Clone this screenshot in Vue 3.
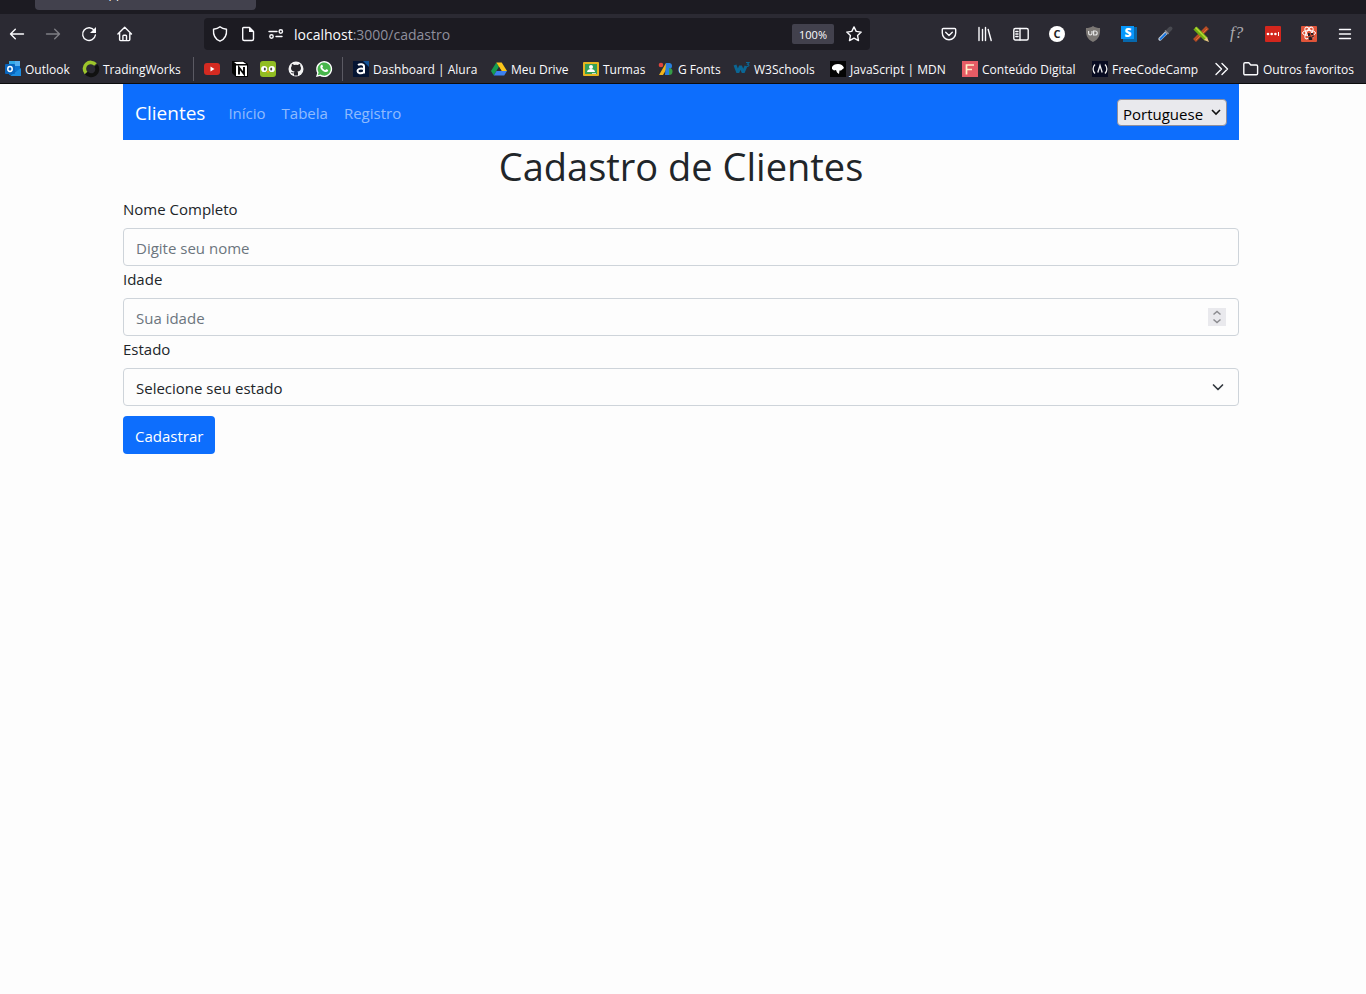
<script setup>
import { ref } from 'vue'

const line = 'fill="none" stroke="#fbfbfe" stroke-width="1.4" stroke-linecap="round" stroke-linejoin="round"'

const navButtons = [
  { label: 'Voltar', art: `<path ${line} d="M14.500 8H1.500M6.300 3.200 1.500 8l4.800 4.800"/>` },
  { label: 'Avançar', dim: true, art: `<path ${line} d="M1.500 8h13M9.700 3.200 14.500 8l-4.800 4.800"/>` },
  { label: 'Recarregar', art: `<path ${line} d="M13.4 4.6A6.4 6.4 0 1 0 14.4 9"/><path fill="#fbfbfe" d="M15 1v6H9z"/>` },
  { label: 'Página inicial', art: `<path ${line} d="M.9 8 7.700 1.200 14.500 8M2.600 7v6.600c0 .6.4 1 1 1h8.200c.6 0 1-.4 1-1V7M5.900 14.500V10c0-.5.3-.8.8-.8h2c.5 0 .8.3.8.8v4.500"/>` }
]

const urlIcons = [
  `<path ${line} d="M8 .8C6.300 2.300 4 3 1.500 3.300 1.100 8.300 2.800 13.200 8 15.200c5.200-2 6.900-6.900 6.500-11.900C12 3 9.700 2.300 8 .8z"/>`,
  `<path ${line} d="M3.500 1.500h6l4 4V13c0 .9-.6 1.500-1.500 1.500H4.200c-.9 0-1.500-.6-1.500-1.500V2.300c0-.5.300-.8.800-.8z"/><path fill="#fbfbfe" d="M9 1v5h5z"/>`,
  `<path ${line} d="M1 5.500h8M8 10.500h6"/><circle ${line} cx="12.800" cy="5.500" r="1.700"/><circle ${line} cx="3.500" cy="10.500" r="1.700"/>`
]

const extensions = [
  { label: 'Pocket', art: `<path ${line} d="M2.300 2.500h11.400c.6 0 1 .4 1 1v3.600a6.700 6.700 0 0 1-13.400 0V3.500c0-.6.400-1 1-1zM4.700 6.300 8 9.400l3.300-3.100"/>` },
  { label: 'Biblioteca', art: `<path ${line} d="M2 1.500v13M5.500 3.500v11M8.500 1.500v13M11.200 3.500l3 11"/>` },
  { label: 'Barras laterais', art: `<rect ${line} x=".8" y="2.500" width="14.400" height="11.500" rx="1.500"/><path ${line} d="M7 2.500V14M2.800 5.500h2.200M2.800 8h2.200M2.800 10.500h2.200"/>` },
  { label: 'Extensão C', art: '<circle cx="8" cy="8" r="8" fill="#fff"/><text x="8" y="12" text-anchor="middle" font-size="11" font-weight="700" fill="#222">C</text>' },
  { label: 'Bloqueador', art: '<path fill="#7b7774" d="M8 0c2 1.500 4.500 2 7 2 .4 6-.5 11-7 14C1.500 13 .6 8 1 2c2.500 0 5-.5 7-2z"/><path fill="none" stroke="#e4e4e4" stroke-width="1.200" d="M3.600 5v2.300a1.700 1.700 0 0 0 3.400 0V5M8.600 5v4h1.600a2 2 0 0 0 0-4z"/>' },
  { label: 'Extensão S', art: '<path fill="#0768ad" d="M13 1h3v15H2v-3h11z"/><path fill="#0797fb" d="M0 0h13v13H0z"/><text x="7" y="11" text-anchor="middle" font-size="12" font-weight="800" fill="#fff">S</text>' },
  { label: 'Conta-gotas', art: '<path stroke="#c3cbd6" stroke-width="3.400" stroke-linecap="round" d="M3 13 9 7"/><path stroke="#1875df" stroke-width="2" d="m3 13.500 6-6"/><path stroke="#484950" stroke-width="4" stroke-linecap="round" d="m10.500 5.500 3-3"/><path stroke="#8b8d96" stroke-width="1.400" d="m8 4.500 3.500 3.500"/>' },
  { label: 'Lápis e régua', art: '<path stroke="#b84c25" stroke-width="4" d="m1.500 14.500 13-13"/><path stroke="#dd6f35" d="m3 14 11-11"/><path stroke="#71ad13" stroke-width="4.500" d="m2 2 11 11"/><path stroke="#b8d934" stroke-width="1.400" d="M2.500 1.500 13 12"/><path fill="#e8c783" d="m11 14 3-3 2 5z"/>' },
  { label: 'Fonte da página', art: '<text x="1" y="12" font-size="17" font-style="italic" fill="#aaa9ae" class="serif">f?</text>' },
  { label: 'Senhas', art: '<rect width="16" height="16" rx="1" fill="#d3261d"/><g fill="#fff"><circle cx="3" cy="8" r="1.300"/><circle cx="6.700" cy="8" r="1.300"/><circle cx="10.400" cy="8" r="1.300"/><path d="M13 6h1v4h-1z"/></g>' },
  { label: 'React', art: '<rect width="16" height="16" rx="1" fill="#e05439"/><g fill="none" stroke="#fff" stroke-width="1"><ellipse cx="8" cy="7" rx="6.500" ry="2.600"/><ellipse cx="8" cy="7" rx="6.500" ry="2.600" transform="rotate(60 8 7)"/><ellipse cx="8" cy="7" rx="6.500" ry="2.600" transform="rotate(120 8 7)"/></g><path fill="#211c22" d="M7 7h5l1 3-2 4H8l-1-4z"/><path stroke="#e05439" d="m6 11 7-2M9 7l3 6"/>' },
  { label: 'Menu', art: '<path stroke="#fbfbfe" stroke-width="1.400" stroke-linecap="round" d="M2.500 3.500h11M2.500 8h11M2.500 12.500h11"/>' }
]

const bookmarks = [
  { text: 'Outlook', art: '<path fill="#1066b5" d="M4 1h11v13H4z"/><path fill="#32a9e7" d="M4 0h6v5H4z"/><path fill="#55b0f0" d="M10 0h5v5h-5z"/><path fill="#0a73cf" d="M4 5h11v5H4z"/><path fill="#1b8ce0" d="m5 15 11-8v8z"/><rect y="3" width="10" height="10" rx="1" fill="#0864bc"/><ellipse cx="5" cy="8" rx="2.200" ry="2.400" fill="none" stroke="#fff" stroke-width="1.500"/>' },
  { text: 'TradingWorks', art: '<path fill="none" stroke="#111" stroke-width="4" d="M13 4.500A6 6 0 1 1 3.500 12"/><path fill="none" stroke="#9dc52b" stroke-width="3.500" d="M3 12A6 6 0 0 1 12.500 3.500"/>' },
  { divider: true },
  { label: 'YouTube', art: '<rect y="2" width="16" height="12" rx="3" fill="#d42a21"/><path fill="#fff" d="m6.500 5.500 4 2.500-4 2.500z"/>' },
  { label: 'Notion', art: '<path fill="#050505" d="M0 0h12l4 3v13H4L0 12z"/><path fill="#fff" d="m2 1 9-.3L14.300 3H4.500zM4 4.500h11V15H4z"/><path fill="none" stroke="#050505" stroke-width="1.900" d="M7 13.500V6.500l5 6.500V6"/>' },
  { label: 'Duolingo', art: '<rect width="16" height="16" rx="3" fill="#91bd22"/><circle cx="4.200" cy="8" r="3.100" fill="#fff"/><circle cx="11.800" cy="8" r="3.100" fill="#fff"/><ellipse cx="4.800" cy="8" rx="1" ry="1.500" fill="#444"/><ellipse cx="11.200" cy="8" rx="1" ry="1.500" fill="#444"/><path fill="#f2a51e" d="M6.500 10h3L8 12.500z"/>' },
  { label: 'GitHub', art: '<circle cx="8" cy="8" r="7.500" fill="#f3f3f4"/><path fill="#26252c" d="M6 14.500v-2.200c-2 .4-2.500-.7-3-1.300 1.500-.2 1.500 1 3 .5.100-.5.400-.8.600-1C4.300 10.200 3 9.200 3 7c0-.8.300-1.500.8-2-.2-.7-.1-1.500.2-2 .8 0 1.500.5 2 .9a8 8 0 0 1 4 0c.5-.4 1.200-.9 2-.9.300.5.400 1.300.2 2 .5.500.8 1.200.8 2 0 2.200-1.300 3.200-3.600 3.500.4.300.6.900.6 1.600v2.400z"/>' },
  { label: 'WhatsApp', art: '<path fill="#fff" d="M0 16 1.200 12A8 8 0 1 1 4 14.900z"/><path fill="#48b64c" d="m1.800 14.300.8-2.700a6.600 6.600 0 1 1 2 2z"/><path fill="#fff" d="M5.300 4c.5-.3 1-.2 1.200.2L7 5.600c0 .4-.5.700-.7 1 .6 1.300 1.600 2.100 2.900 2.700l.9-1c.3-.2 1.500.5 2 .8.200 1-.7 2-2 2C7.200 11 4.400 8 4.300 6c0-.8.400-1.600 1-2z"/>' },
  { divider: true },
  { text: 'Dashboard | Alura', art: '<path fill="#051533" d="M0 0h16v16H0z"/><path fill="#135296" d="M10 0h6v6z"/><path fill="none" stroke="#fff" stroke-width="2" d="M5 4c2-1.500 6-1 6 1.500v7M11 8C7 7 4.500 8 4.500 10s3.500 3.500 6.500 1"/>' },
  { text: 'Meu Drive', art: '<path fill="#169b50" d="M5.300 1.500 8 6l-5.200 8.500L0 10z"/><path fill="#fbc51a" d="M5.300 1.500h5.400L16 10h-5.400z"/><path fill="#3c80ef" d="M5.500 10H16l-2.800 4.500H2.800z"/><path fill="#2b2a33" d="m8 6 2.500 4h-5z"/>' },
  { text: 'Turmas', art: '<rect y="1" width="16" height="14" rx="1" fill="#e6b51f"/><path fill="#35a057" d="M2 3h12v10H2z"/><circle cx="8" cy="6" r="2" fill="#fff"/><path fill="#fff" d="M4 11c0-4 8-4 8 0z"/><path fill="#c8d8c8" d="M9 12h4v1H9z"/>' },
  { text: 'G Fonts', art: '<path fill="#f0b31b" d="M8 2h4L5 14H1z"/><path fill="#2880df" d="M8 2h3v12H7z"/><circle cx="3" cy="4" r="2.300" fill="#df463d"/><path fill="#2880df" d="M11 2a3 3 0 0 1 0 6z"/><path fill="#359c48" d="M11 7a3.500 3.500 0 0 1 0 7z"/>' },
  { text: 'W3Schools', art: '<path fill="none" stroke="#0b6694" stroke-width="3" stroke-linejoin="bevel" d="m1 4 2.800 7.500L6.500 5l2.700 6.500L12 5"/><path fill="none" stroke="#0b6694" stroke-width="1.100" d="M12 1.500h3l-1.500 1.700c2.500.3 1.500 2.800-1 2"/>' },
  { text: 'JavaScript | MDN', art: '<path fill="#050505" d="M0 0h16v16H0z"/><path fill="#fff" d="M2 6c1-2 3-3 6-3s5 1.500 6 4l-3 2.500H9.500L9 13l-2-1.500L6 9 4 9.500 2 8z"/>' },
  { text: 'Conteúdo Digital', art: '<path fill="#e65c65" d="M0 0h16v16H0z"/><path fill="none" stroke="#fff0ca" stroke-width="1.700" d="M4.500 13.500V4H12M4.500 8.500H10"/>' },
  { text: 'FreeCodeCamp', art: '<path fill="#080b21" d="M0 0h16v16H0z"/><path fill="none" stroke="#eee" stroke-width="1.300" d="M3 3.500C.5 6 .5 10 3 12.500M13 3.500c2.500 2.500 2.500 6.500 0 9M5.800 11.500 8 4.500l2.200 7"/>' },
  { label: 'Mais favoritos', art: `<path ${line} d="m3 2.500 5.500 5.500L3 13.500M9 2.500l5.500 5.500L9 13.500"/>` },
  { text: 'Outros favoritos', art: `<path ${line} d="M.8 4V3c0-.7.500-1.200 1.200-1.200H5.800l2 2.200h5.500c.8 0 1.300.5 1.300 1.300v7.200c0 .8-.5 1.300-1.300 1.300H2.100c-.8 0-1.300-.5-1.300-1.300z"/>` }
]

const links = ['Início', 'Tabela', 'Registro']
const language = ref('pt')
const form = ref({ name: '', age: '', state: '' })
</script>

<template>
  <div class="window">
    <header class="browser">
      <div class="tabs"><div class="tab">React App</div></div>
      <div class="toolbar">
        <div class="tools">
          <button v-for="b in navButtons" :key="b.label" class="tool" :class="{ dim: b.dim }" type="button" :aria-label="b.label">
            <svg class="icon" viewBox="0 0 16 16" v-html="b.art"></svg>
          </button>
        </div>
        <div class="address">
          <svg v-for="(art, i) in urlIcons" :key="i" class="icon" viewBox="0 0 16 16" v-html="art"></svg>
          <div class="url">localhost<span>:3000/cadastro</span></div>
          <button class="zoom" type="button">100%</button>
          <button class="star" type="button" aria-label="Adicionar aos favoritos">
            <svg class="icon" viewBox="0 0 16 16"><path fill="none" stroke="#fbfbfe" stroke-width="1.4" stroke-linejoin="round" d="m8 .9 2.200 4.500 5 .7-3.600 3.500.9 5L8 12.200l-4.500 2.400.9-5L.8 6.100l5-.7z" /></svg>
          </button>
        </div>
        <div class="tools">
          <button v-for="e in extensions" :key="e.label" class="tool" type="button" :aria-label="e.label">
            <svg class="icon" viewBox="0 0 16 16" v-html="e.art"></svg>
          </button>
        </div>
      </div>
      <nav class="bookmarks" aria-label="Favoritos">
        <template v-for="(b, i) in bookmarks" :key="i">
          <span v-if="b.divider" class="divider"></span>
          <a v-else href="#" class="bookmark" :aria-label="b.label">
            <svg class="icon" viewBox="0 0 16 16" v-html="b.art"></svg><span v-if="b.text">{{ b.text }}</span>
          </a>
        </template>
      </nav>
    </header>

    <div class="page">
      <div class="container">
        <nav class="navbar" aria-label="Principal">
          <a class="brand" href="#">Clientes</a>
          <a v-for="l in links" :key="l" class="link" href="#">{{ l }}</a>
          <div class="language">
            <select v-model="language" aria-label="Idioma">
              <option value="pt">Portuguese</option>
              <option value="en">English</option>
            </select>
            <svg class="caret" viewBox="0 0 10 10"><path fill="none" stroke="#111" stroke-width="1.600" d="m1 3 4 4 4-4" /></svg>
          </div>
        </nav>
        <main>
          <h1>Cadastro de Clientes</h1>
          <form @submit.prevent>
            <label for="name">Nome Completo</label>
            <div class="field">
              <input id="name" v-model="form.name" type="text" placeholder="Digite seu nome" />
            </div>
            <label for="age">Idade</label>
            <div class="field">
              <input id="age" v-model="form.age" type="number" placeholder="Sua idade" />
              <svg class="spinner" viewBox="0 0 18 18"><path fill="#e9e9ed" d="M0 0h18v18H0z" /><path fill="none" stroke="#8b8b8f" stroke-width="1.500" d="m5.500 6.500 3.500-3 3.500 3M5.500 11.500l3.500 3 3.500-3" /></svg>
            </div>
            <label for="state">Estado</label>
            <div class="field">
              <select id="state" v-model="form.state">
                <option value="">Selecione seu estado</option>
                <option value="SP">São Paulo</option>
              </select>
              <svg class="chevron" viewBox="0 0 16 16"><path fill="none" stroke="#343a40" stroke-width="1.700" stroke-linecap="round" stroke-linejoin="round" d="m3.500 6 4.500 4.500L12.500 6" /></svg>
            </div>
            <button class="submit" type="submit">Cadastrar</button>
          </form>
        </main>
      </div>
    </div>
  </div>
</template>

<style>
body {
  background: #fdfdfd;
}
</style>

<style scoped>
* {
  box-sizing: border-box;
}
.window {
  font-family: "Open Sans", "Noto Sans", sans-serif;
  font-size: 15px;
  line-height: 24px;
  color: #212529;
}
button,
input,
select {
  font: inherit;
}
a {
  text-decoration: none;
}
.browser {
  background: #2b2a33;
  color: #fbfbfe;
  border-bottom: 1px solid #0c0c0d;
  overflow: hidden;
}
.tabs {
  height: 14px;
  padding: 0 35px 4px;
  background: #1c1b22;
}
.tab {
  display: flex;
  align-items: flex-end;
  width: 221px;
  height: 10px;
  padding: 0 32px 8px;
  border-radius: 0 0 4px 4px;
  background: #42414d;
  font-size: 12px;
  line-height: 16px;
}
.toolbar {
  display: flex;
  align-items: center;
  height: 40px;
  padding: 0 5px 0 1px;
}
.tools {
  display: flex;
  gap: 4px;
}
.tool,
.star {
  display: flex;
  align-items: center;
  justify-content: center;
  width: 32px;
  height: 32px;
  padding: 0;
  border: 0;
  background: none;
}
.dim {
  opacity: 0.4;
}
.icon {
  flex: none;
  width: 16px;
  height: 16px;
  overflow: visible;
}
.icon :deep(.serif) {
  font-family: "Liberation Serif", serif;
}
.address {
  flex: 1;
  display: flex;
  align-items: center;
  gap: 12px;
  min-width: 0;
  height: 32px;
  margin: 0 63px;
  padding-left: 8px;
  border-radius: 4px;
  background: #1c1b22;
}
.url {
  flex: 1;
  margin-left: -2px;
  padding-top: 2px;
  font-size: 14px;
}
.url span {
  color: #8f8f9d;
}
.zoom {
  width: 42px;
  height: 20px;
  padding: 2px 0 0;
  border: 0;
  border-radius: 2px;
  background: #42414d;
  color: #fbfbfe;
  font-size: 11px;
  line-height: 18px;
}
.star {
  margin-left: -8px;
}
.bookmarks {
  display: grid;
  grid-template-columns: 78px 110px 11px repeat(4, 28px) 26px 11px 138px 92px 75px 76px 96px 132px 130px 121px 30px 1fr;
  align-items: center;
  height: 29px;
  padding-left: 5px;
}
.bookmark {
  display: flex;
  align-items: center;
  gap: 4px;
  color: #fbfbfe;
  font-size: 12px;
  line-height: 16px;
  white-space: nowrap;
}
.bookmark span {
  padding-top: 2px;
}
.divider {
  width: 1px;
  height: 24px;
  background: #5b5a63;
}
.page {
  padding-right: 4px;
}
.container {
  max-width: 1140px;
  margin: 0 auto;
  padding: 0 12px;
}
.navbar {
  display: flex;
  align-items: center;
  height: 56px;
  padding: 0 12px;
  background: #0d6efd;
}
.brand {
  margin-right: 15px;
  padding-top: 2px;
  color: #fff;
  font-size: 19px;
}
.link {
  padding: 10px 8px 8px;
  color: rgba(255, 255, 255, 0.55);
}
.language {
  display: grid;
  align-items: center;
  margin-left: auto;
}
.language select,
.field input,
.field select {
  grid-area: 1 / 1;
  appearance: none;
  margin: 0;
}
.language select {
  width: 110px;
  height: 27px;
  padding: 2px 5px 0;
  border: 1px solid #8f8f9d;
  border-radius: 4px;
  background: #e9e9ed;
  color: #000;
}
.caret,
.spinner,
.chevron {
  grid-area: 1 / 1;
  justify-self: end;
  pointer-events: none;
}
.caret {
  width: 10px;
  height: 10px;
  margin-right: 6px;
}
h1 {
  margin: 0 0 8px;
  padding-top: 4px;
  font-size: 38px;
  font-weight: 400;
  line-height: 44px;
  text-align: center;
}
label {
  display: block;
  padding: 1px 0 7px;
}
.field {
  display: grid;
  align-items: center;
}
.field input,
.field select {
  width: 100%;
  height: 38px;
  padding: 2px 12px 0;
  border: 1px solid #ced4da;
  border-radius: 4px;
  background: transparent;
  color: #212529;
}
.field input::placeholder {
  color: #6c757d;
  opacity: 1;
}
.field input::-webkit-inner-spin-button {
  appearance: none;
}
.spinner {
  width: 18px;
  height: 18px;
  margin-right: 13px;
}
.chevron {
  width: 16px;
  height: 16px;
  margin-right: 13px;
}
.submit {
  height: 38px;
  margin-top: 10px;
  padding: 2px 12px 0;
  border: 0;
  border-radius: 4px;
  background: #0d6efd;
  color: #fff;
}
</style>
